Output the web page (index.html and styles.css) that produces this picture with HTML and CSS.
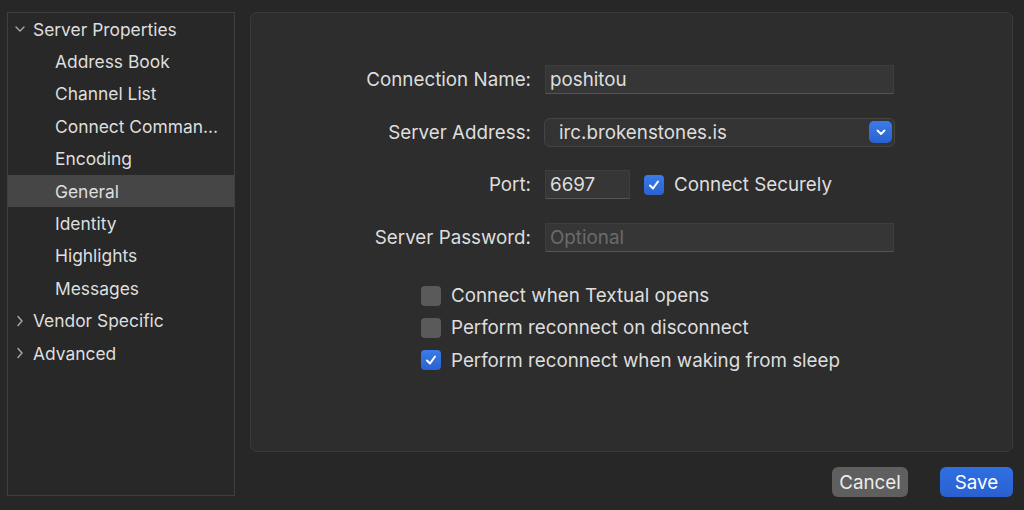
FILE: index.html
```html
<!DOCTYPE html>
<html>
<head>
<meta charset="utf-8">
<link rel="stylesheet" href="styles.css">
</head>
<body>
<div class="window">
  <div class="sidebar">
    <div class="row group"><span class="chev"><svg width="10" height="10" viewBox="0 0 10 10"><path d="M1 3 L5 7 L9 3" fill="none" stroke="#a8a8a8" stroke-width="1.4" stroke-linecap="round" stroke-linejoin="round"/></svg></span>Server Properties</div>
    <div class="row child">Address Book</div>
    <div class="row child">Channel List</div>
    <div class="row child">Connect Comman…</div>
    <div class="row child">Encoding</div>
    <div class="row child selected">General</div>
    <div class="row child">Identity</div>
    <div class="row child">Highlights</div>
    <div class="row child">Messages</div>
    <div class="row group"><span class="chev"><svg width="10" height="12" viewBox="0 0 10 12"><path d="M3 1.5 L7 6 L3 10.5" fill="none" stroke="#a8a8a8" stroke-width="1.4" stroke-linecap="round" stroke-linejoin="round"/></svg></span>Vendor Specific</div>
    <div class="row group"><span class="chev"><svg width="10" height="12" viewBox="0 0 10 12"><path d="M3 1.5 L7 6 L3 10.5" fill="none" stroke="#a8a8a8" stroke-width="1.4" stroke-linecap="round" stroke-linejoin="round"/></svg></span>Advanced</div>
  </div>
  <div class="main">
    <div class="panel">
      <div class="form">
        <div class="label">Connection Name:</div>
        <div class="field wide">poshitou</div>
        <div class="label">Server Address:</div>
        <div class="combo"><span>irc.brokenstones.is</span><span class="combo-btn"><svg width="10" height="7" viewBox="0 0 10 7"><path d="M1.5 1.5 L5 5 L8.5 1.5" fill="none" stroke="#fff" stroke-width="1.8" stroke-linecap="round" stroke-linejoin="round"/></svg></span></div>
        <div class="label">Port:</div>
        <div class="port-row">
          <div class="field port">6697</div>
          <div class="check-item"><span class="box on"><svg width="14" height="14" viewBox="0 0 14 14"><path d="M3 7.5 L6 10.5 L11 3.5" fill="none" stroke="#fff" stroke-width="2" stroke-linecap="round" stroke-linejoin="round"/></svg></span>Connect Securely</div>
        </div>
        <div class="label">Server Password:</div>
        <div class="field wide placeholder">Optional</div>
      </div>
      <div class="checks">
        <div class="check-item"><span class="box"></span>Connect when Textual opens</div>
        <div class="check-item"><span class="box"></span>Perform reconnect on disconnect</div>
        <div class="check-item"><span class="box on"><svg width="14" height="14" viewBox="0 0 14 14"><path d="M3 7.5 L6 10.5 L11 3.5" fill="none" stroke="#fff" stroke-width="2" stroke-linecap="round" stroke-linejoin="round"/></svg></span>Perform reconnect when waking from sleep</div>
      </div>
    </div>
    <div class="buttons">
      <div class="btn cancel">Cancel</div>
      <div class="btn save">Save</div>
    </div>
  </div>
</div>
</body>
</html>
```

FILE: styles.css
```css
html, body {
  margin: 0;
  padding: 0;
  background: #272727;
  width: 1024px;
  height: 510px;
  overflow: hidden;
  font-family: Inter, "Liberation Sans", sans-serif;
  font-size: 17.4px;
  color: #dedede;
}

.window {
  display: flex;
  padding: 12px 11px 0 7px;
  gap: 15px;
}

.sidebar {
  width: 226px;
  height: 482px;
  border: 1px solid #3f3f3f;
  background: #282828;
  display: flex;
  flex-direction: column;
}

.row {
  height: 32.4px;
  display: flex;
  align-items: center;
  flex-shrink: 0;
  white-space: nowrap;
}

.group {
  padding-left: 7px;
}

.chev {
  width: 18px;
  display: flex;
  align-items: center;
  justify-content: flex-start;
  margin-right: 0;
}

.child {
  padding-left: 47px;
}

.selected {
  background: #464646;
}

.main {
  flex: 1;
  display: flex;
  flex-direction: column;
  font-size: 18.8px;
}

.panel {
  height: 438px;
  border: 1px solid #3b3b3b;
  border-radius: 7px;
  background: #2d2d2d;
  box-sizing: content-box;
}

.form {
  display: grid;
  grid-template-columns: 280px 350px;
  grid-auto-rows: 29px;
  row-gap: 23.5px;
  column-gap: 14px;
  margin-top: 52px;
  align-items: center;
}

.label {
  text-align: right;
  white-space: nowrap;
}

.field {
  height: 29px;
  box-sizing: border-box;
  background: #363636;
  border: 1px solid #3e3e3e;
  border-bottom-color: #555;
  padding-left: 4px;
  display: flex;
  align-items: center;
  white-space: nowrap;
}

.wide {
  width: 349px;
}

.placeholder {
  color: #6b6b6b;
}

.combo {
  height: 29px;
  width: 351px;
  margin-left: -1px;
  box-sizing: border-box;
  background: #333;
  border: 1px solid #454545;
  border-radius: 6px;
  display: flex;
  align-items: center;
  justify-content: space-between;
  padding-left: 14px;
  padding-right: 2px;
}

.combo-btn {
  width: 23px;
  height: 22px;
  border-radius: 5px;
  background: linear-gradient(#3a7bea, #2a62cf);
  display: flex;
  align-items: center;
  justify-content: center;
}

.port-row {
  display: flex;
  align-items: center;
  gap: 14px;
}

.port {
  width: 85px;
}

.check-item {
  display: flex;
  align-items: center;
  gap: 10px;
  white-space: nowrap;
  height: 32.3px;
}

.box {
  width: 20px;
  height: 20px;
  border-radius: 4px;
  background: #5a5a5a;
  display: flex;
  align-items: center;
  justify-content: center;
  flex-shrink: 0;
}

.box.on {
  background: linear-gradient(#3a7bea, #2a62cf);
}

.checks {
  margin-top: 28px;
  padding-left: 170px;
  display: flex;
  flex-direction: column;
}

.buttons {
  display: flex;
  justify-content: flex-end;
  gap: 32px;
  margin-top: 15px;
}

.btn {
  height: 30px;
  border-radius: 6px;
  display: flex;
  align-items: center;
  justify-content: center;
  color: #ececec;
}

.cancel {
  width: 76px;
  background: #5f5f5f;
}

.save {
  width: 73px;
  background: linear-gradient(#2f70e2, #2a60d0);
  color: #fff;
}
```
